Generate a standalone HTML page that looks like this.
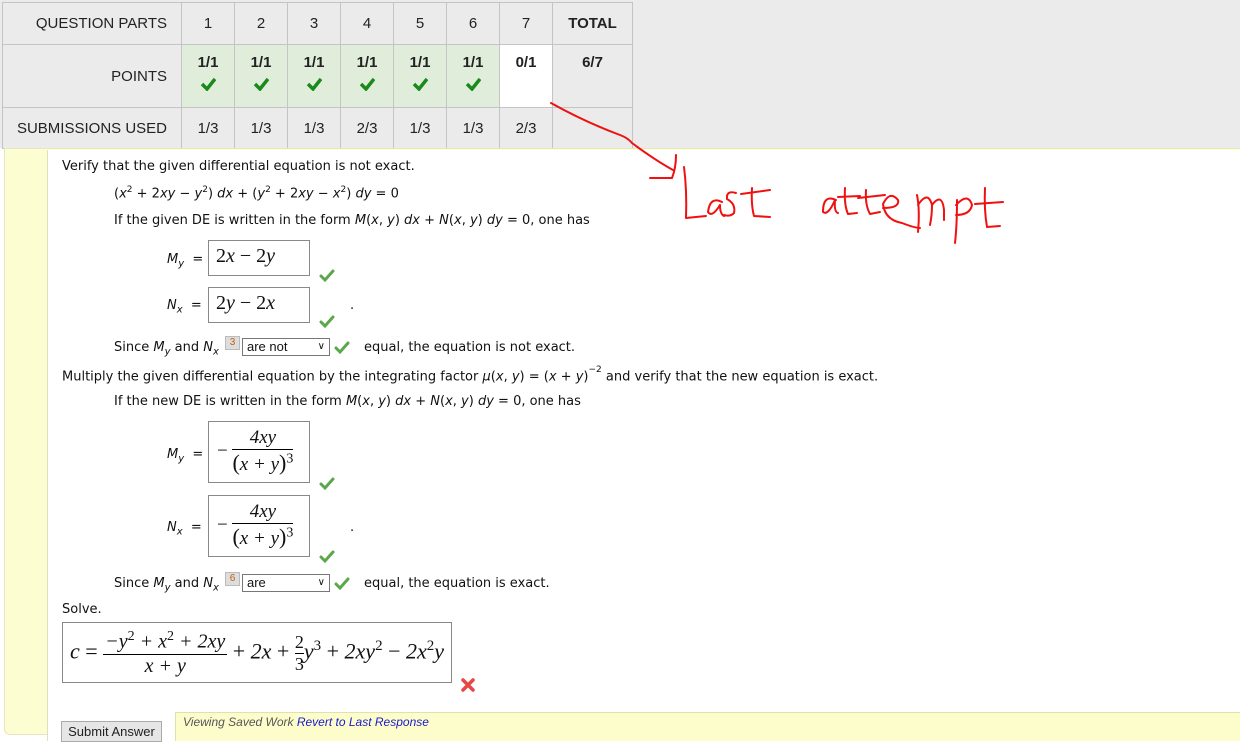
<!DOCTYPE html>
<html><head><meta charset="utf-8"><style>
*{margin:0;padding:0;box-sizing:border-box}
body{width:1240px;height:741px;position:relative;overflow:hidden;background:#fff;font-family:"DejaVu Sans","Liberation Sans",sans-serif;font-size:13px;color:#111}
.a{position:absolute;white-space:nowrap}
table{position:absolute;left:2px;top:2px;border-collapse:collapse;font-family:"Liberation Sans",sans-serif;font-size:15px;color:#222}
td{border:1px solid #c4c4c4;text-align:center;width:53px}
td.h{width:179px;text-align:right;padding-right:14px}
.g{background:#e1eddb}
.w{background:#fff}
.b{font-weight:bold}
.box{position:absolute;border:1px solid #888;background:#fff;font-family:"Liberation Serif",serif;font-style:italic;font-size:20px;white-space:nowrap}
.sel{position:absolute;border:1px solid #777;background:#fff;font-family:"Liberation Sans",sans-serif;font-size:13px;padding-left:4px;height:18px;line-height:16px}
.num{position:absolute;background:#ddd;border:1px solid #bbb;color:#c06010;font-size:10px;width:15px;height:14px;text-align:center;line-height:12px;font-family:"Liberation Sans",sans-serif}
sup{font-size:9px}
sub{font-size:10px}
.fr{display:inline-block;vertical-align:middle;text-align:center}
.fr>span{display:block}
.ck{display:block;margin:6px auto 0}
</style></head><body>
<div class="a" style="left:0;top:0;width:1240px;height:148px;background:#ebebeb"></div>
<table>
<tr style="height:42px"><td class="h">QUESTION PARTS</td><td>1</td><td>2</td><td>3</td><td>4</td><td>5</td><td>6</td><td>7</td><td class="b" style="width:80px">TOTAL</td></tr>
<tr style="height:63px"><td class="h">POINTS</td>
<td class="g b" style="vertical-align:top;padding-top:9px">1/1<svg class="ck" width="16" height="14"><path d="M2 7 l5 5 l8 -10" fill="none" stroke="#1a8a1a" stroke-width="3.5"/></svg></td>
<td class="g b" style="vertical-align:top;padding-top:9px">1/1<svg class="ck" width="16" height="14"><path d="M2 7 l5 5 l8 -10" fill="none" stroke="#1a8a1a" stroke-width="3.5"/></svg></td>
<td class="g b" style="vertical-align:top;padding-top:9px">1/1<svg class="ck" width="16" height="14"><path d="M2 7 l5 5 l8 -10" fill="none" stroke="#1a8a1a" stroke-width="3.5"/></svg></td>
<td class="g b" style="vertical-align:top;padding-top:9px">1/1<svg class="ck" width="16" height="14"><path d="M2 7 l5 5 l8 -10" fill="none" stroke="#1a8a1a" stroke-width="3.5"/></svg></td>
<td class="g b" style="vertical-align:top;padding-top:9px">1/1<svg class="ck" width="16" height="14"><path d="M2 7 l5 5 l8 -10" fill="none" stroke="#1a8a1a" stroke-width="3.5"/></svg></td>
<td class="g b" style="vertical-align:top;padding-top:9px">1/1<svg class="ck" width="16" height="14"><path d="M2 7 l5 5 l8 -10" fill="none" stroke="#1a8a1a" stroke-width="3.5"/></svg></td>
<td class="w b" style="vertical-align:top;padding-top:9px">0/1</td>
<td class="b" style="vertical-align:top;padding-top:9px">6/7</td></tr>
<tr style="height:41px"><td class="h">SUBMISSIONS USED</td><td>1/3</td><td>1/3</td><td>1/3</td><td>2/3</td><td>1/3</td><td>1/3</td><td>2/3</td><td></td></tr>
</table>
<div class="a" style="left:4px;top:148px;width:1240px;height:587px;background:#fdfdd2;border:1px solid #e6e6c0;border-radius:0 0 0 6px"></div>
<div class="a" style="left:47px;top:150px;width:1193px;height:591px;background:#fff;border-left:1px solid #e0e0c0"></div>

<div class="a" style="left:62px;top:159px">Verify that the given differential equation is not exact.</div>
<div class="a" style="left:114px;top:185px">(<i>x</i><sup>2</sup> + 2<i>xy</i> − <i>y</i><sup>2</sup>) <i>dx</i> + (<i>y</i><sup>2</sup> + 2<i>xy</i> − <i>x</i><sup>2</sup>) <i>dy</i> = 0</div>
<div class="a" style="left:114px;top:213px">If the given DE is written in the form <i>M</i>(<i>x</i>, <i>y</i>) <i>dx</i> + <i>N</i>(<i>x</i>, <i>y</i>) <i>dy</i> = 0, one has</div>
<div class="a" style="left:167px;top:252px"><i>M<sub>y</sub></i> &nbsp;=</div>
<div class="box" style="left:208px;top:240px;width:102px;height:36px;padding:4px 7px;font-style:normal">2<i>x</i> − 2<i>y</i></div>
<div class="a" style="left:167px;top:298px"><i>N<sub>x</sub></i> &nbsp;=</div>
<div class="box" style="left:208px;top:287px;width:102px;height:36px;padding:4px 7px;font-style:normal">2<i>y</i> − 2<i>x</i></div>
<div class="a" style="left:350px;top:298px">.</div>
<div class="a" style="left:114px;top:340px">Since <i>M<sub>y</sub></i> and <i>N<sub>x</sub></i></div>
<div class="num" style="left:225px;top:336px">3</div>
<div class="sel" style="left:242px;top:338px;width:88px">are not<span style="position:absolute;right:4px;top:0;font-size:10px">∨</span></div>
<div class="a" style="left:364px;top:340px">equal, the equation is not exact.</div>
<div class="a" style="left:62px;top:368px">Multiply the given differential equation by the integrating factor <i>μ</i>(<i>x</i>, <i>y</i>) = (<i>x</i> + <i>y</i>)<sup style="position:relative;top:-3px">−2</sup> and verify that the new equation is exact.</div>
<div class="a" style="left:114px;top:394px">If the new DE is written in the form <i>M</i>(<i>x</i>, <i>y</i>) <i>dx</i> + <i>N</i>(<i>x</i>, <i>y</i>) <i>dy</i> = 0, one has</div>
<div class="a" style="left:167px;top:447px"><i>M<sub>y</sub></i> &nbsp;=</div>
<div class="box" style="left:208px;top:421px;width:102px;height:62px;padding:5px 0 0 8px;font-size:19px"><span style="font-style:normal;vertical-align:middle">− </span><span class="fr"><span style="border-bottom:1px solid #000;padding:0 4px">4<i>xy</i></span><span><span style="font-style:normal;font-size:22px">(</span><i>x</i> + <i>y</i><span style="font-style:normal;font-size:22px">)</span><sup style="font-size:14px;font-style:normal">3</sup></span></span></div>
<div class="a" style="left:167px;top:520px"><i>N<sub>x</sub></i> &nbsp;=</div>
<div class="box" style="left:208px;top:495px;width:102px;height:62px;padding:5px 0 0 8px;font-size:19px"><span style="font-style:normal;vertical-align:middle">− </span><span class="fr"><span style="border-bottom:1px solid #000;padding:0 4px">4<i>xy</i></span><span><span style="font-style:normal;font-size:22px">(</span><i>x</i> + <i>y</i><span style="font-style:normal;font-size:22px">)</span><sup style="font-size:14px;font-style:normal">3</sup></span></span></div>
<div class="a" style="left:350px;top:520px">.</div>
<div class="a" style="left:114px;top:576px">Since <i>M<sub>y</sub></i> and <i>N<sub>x</sub></i></div>
<div class="num" style="left:225px;top:572px">6</div>
<div class="sel" style="left:242px;top:574px;width:88px">are<span style="position:absolute;right:4px;top:0;font-size:10px">∨</span></div>
<div class="a" style="left:364px;top:576px">equal, the equation is exact.</div>
<div class="a" style="left:62px;top:602px">Solve.</div>
<div class="box" style="left:62px;top:622px;width:390px;height:61px;padding:6px 0 0 7px;font-size:22px"><i>c</i> <span style="font-style:normal">=</span> <span class="fr" style="font-size:20px"><span style="border-bottom:1px solid #000;padding:0 2px">−<i>y</i><sup style="font-size:14px;font-style:normal">2</sup> + <i>x</i><sup style="font-size:14px;font-style:normal">2</sup> + 2<i>xy</i></span><span><i>x</i> + <i>y</i></span></span> <span style="font-style:normal">+</span> 2<i>x</i> <span style="font-style:normal">+</span> <span class="fr" style="font-size:18px;font-style:normal"><span style="border-bottom:1px solid #000">2</span><span>3</span></span><i>y</i><sup style="font-size:15px;font-style:normal">3</sup> <span style="font-style:normal">+</span> 2<i>xy</i><sup style="font-size:15px;font-style:normal">2</sup> <span style="font-style:normal">−</span> 2<i>x</i><sup style="font-size:15px;font-style:normal">2</sup><i>y</i></div>
<svg class="a" style="left:0;top:0" width="1240" height="741">
<g fill="none" stroke="#5aa84a" stroke-width="3" stroke-linecap="round">
<path d="M321 276 l4 4 l8 -9"/><path d="M321 322 l4 4 l8 -9"/><path d="M336 348 l4 4 l8 -9"/>
<path d="M321 484 l4 4 l8 -9"/><path d="M321 557 l4 4 l8 -9"/><path d="M336 584 l4 4 l8 -9"/>
</g>
<g stroke="#e84545" stroke-width="3.5" stroke-linecap="round"><path d="M463 680 l10 10 M473 680 l-10 10"/></g>
<g fill="none" stroke="#f01010" stroke-width="2" stroke-linecap="round" stroke-linejoin="round">
<path d="M551 103 Q585 122 620 135 Q628 138 632 143 Q655 160 673 170"/>
<path d="M676 155 Q676 168 672 178 L650 178"/>
<path d="M684 167 Q687 190 686 218 L706 216"/>
<path d="M722 202 Q710 196 708 212 Q712 218 720 205 Q720 214 724 216"/>
<path d="M736 193 Q726 190 727 199 Q736 204 734 213 Q730 217 724 215"/>
<path d="M752 188 Q751 205 754 216 L770 217 M741 194 L770 190"/>
<path d="M836 200 Q823 194 823 212 Q828 216 835 200 Q834 212 838 213"/>
<path d="M845 188 Q844 205 848 214 L857 213 M838 197 L860 196"/>
<path d="M866 190 Q865 205 870 214 L880 212 M858 198 L885 195"/>
<path d="M883 208 Q900 208 898 200 Q890 190 883 204 Q885 220 902 223 Q915 228 920 228"/>
<path d="M917 195 Q920 210 918 232 M918 205 Q928 190 932 205 Q932 215 930 225 M932 205 Q942 192 944 210 L944 220"/>
<path d="M957 200 Q957 225 955 243 M956 205 Q968 192 972 205 Q970 215 956 215"/>
<path d="M985 188 Q984 210 987 227 L1000 226 M975 204 L1003 202"/>
</g>
</svg>
<div class="a" style="left:175px;top:712px;width:1065px;height:29px;background:#fdfdcc;border-top:1px solid #e0e0b0;border-left:1px solid #e0e0b0"></div>
<div class="a" style="left:183px;top:715px;font-family:'Liberation Sans',sans-serif;font-size:12px;font-style:italic;color:#555">Viewing Saved Work <span style="color:#1a1acc">Revert to Last Response</span></div>
<div class="a" style="left:61px;top:721px;width:101px;height:21px;background:#e6e6e6;border:1px solid #aaa;font-family:'Liberation Sans',sans-serif;font-size:13px;text-align:center;line-height:19px;color:#222">Submit Answer</div>
</body></html>
